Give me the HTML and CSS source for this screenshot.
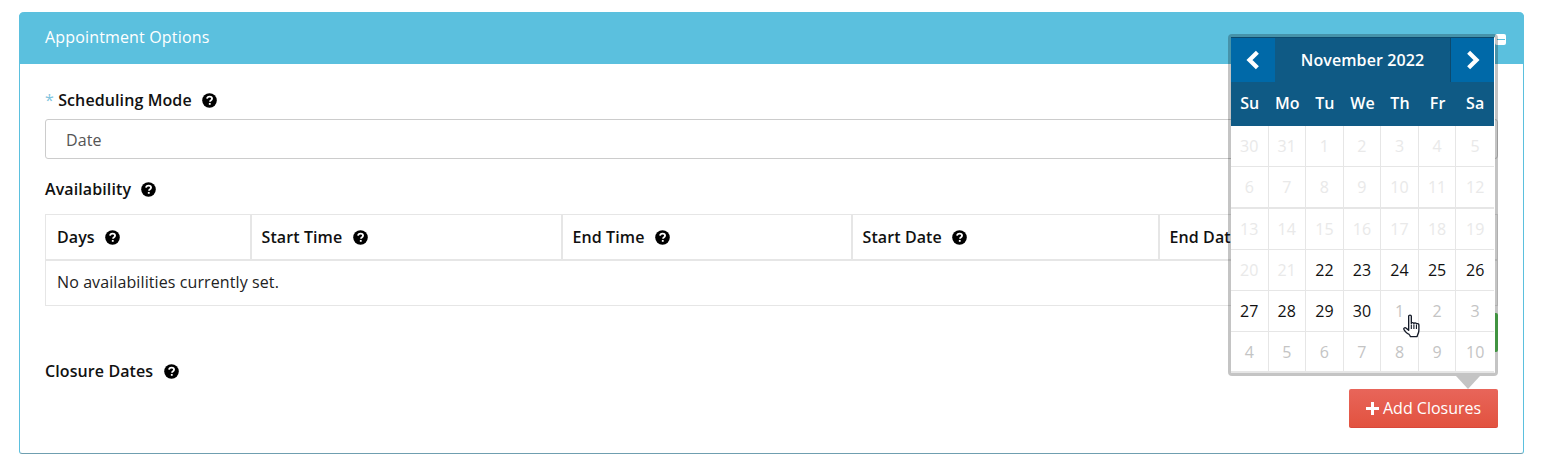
FILE: index.html
```html
<!DOCTYPE html>
<html lang="en">
<head>
<meta charset="utf-8">
<title>Appointment Options</title>
<link rel="stylesheet" href="styles.css">
</head>
<body>
<svg class="defs" width="0" height="0" aria-hidden="true">
  <symbol id="q" viewBox="0 0 14 14">
    <circle cx="7" cy="7" r="6.8" fill="#000"/>
    <path d="M4.700 5.300C4.800 4 5.800 3.300 7.100 3.300c1.300 0 2.300.8 2.300 1.900 0 1-.6 1.400-1.200 1.800-.5.3-.7.5-.7 1.100" fill="none" stroke="#fff" stroke-width="1.700"/>
    <rect x="6.400" y="9.300" width="1.700" height="1.700" fill="#fff"/>
  </symbol>
</svg>
<main class="panel">
  <header class="panel-head">
    <h2 class="panel-title">Appointment Options</h2>
    <span class="collapse"><span class="collapse-bar"></span></span>
  </header>
  <div class="panel-body">
    <div class="label first"><span class="req">*</span> Scheduling Mode <svg class="help"><use href="#q"/></svg></div>
    <div class="select">Date</div>
    <div class="label avail">Availability <svg class="help"><use href="#q"/></svg></div>
    <table class="grid">
      <thead>
        <tr>
          <th class="c1">Days <svg class="help"><use href="#q"/></svg></th>
          <th class="c2">Start Time <svg class="help"><use href="#q"/></svg></th>
          <th class="c3">End Time <svg class="help"><use href="#q"/></svg></th>
          <th class="c4">Start Date <svg class="help"><use href="#q"/></svg></th>
          <th>End Date <svg class="help"><use href="#q"/></svg></th>
        </tr>
      </thead>
      <tbody>
        <tr><td colspan="5">No availabilities currently set.</td></tr>
      </tbody>
    </table>
    <div class="green-row"><button class="btn btn-green">+ Add Availability</button></div>
    <div class="closure-row">
      <div class="label">Closure Dates <svg class="help"><use href="#q"/></svg></div>
      <button class="btn btn-red"><svg class="plus" viewBox="0 0 13 13"><path d="M5 0h3v5h5v3H8v5H5V8H0V5h5z" fill="#fff"/></svg> Add Closures</button>
    </div>
  </div>
</main>

<div class="picker">
  <div class="picker-top">
    <div class="nav"><svg viewBox="0 0 12 16" class="chev"><path d="M9.500 1.800 3.200 8l6.300 6.200" fill="none" stroke="#fff" stroke-width="3.400"/></svg></div>
    <div class="month">November 2022</div>
    <div class="nav nav-r"><svg viewBox="0 0 12 16" class="chev"><path d="M2.500 1.800 8.800 8l-6.300 6.200" fill="none" stroke="#fff" stroke-width="3.400"/></svg></div>
  </div>
  <div class="dow"><span>Su</span><span>Mo</span><span>Tu</span><span>We</span><span>Th</span><span>Fr</span><span>Sa</span></div>
  <div class="days">
    <span class="dis">30</span><span class="dis">31</span><span class="dis">1</span><span class="dis">2</span><span class="dis">3</span><span class="dis">4</span><span class="dis">5</span>
    <span class="dis">6</span><span class="dis">7</span><span class="dis">8</span><span class="dis">9</span><span class="dis">10</span><span class="dis">11</span><span class="dis">12</span>
    <span class="dis">13</span><span class="dis">14</span><span class="dis">15</span><span class="dis">16</span><span class="dis">17</span><span class="dis">18</span><span class="dis">19</span>
    <span class="dis">20</span><span class="dis">21</span><span>22</span><span>23</span><span>24</span><span>25</span><span>26</span>
    <span>27</span><span>28</span><span>29</span><span>30</span><span class="old">1</span><span class="old">2</span><span class="old">3</span>
    <span class="old">4</span><span class="old">5</span><span class="old">6</span><span class="old">7</span><span class="old">8</span><span class="old">9</span><span class="old">10</span>
  </div>
  <div class="arrow"></div>
</div>

<svg class="cursor" viewBox="0 0 18 24" preserveAspectRatio="none" aria-hidden="true">
  <path d="M6 2.200c0-1.500 2.400-1.500 2.400 0V9c0-1 2.300-1 2.300.3 0-1 2.300-1 2.300.4 0-.8 2.200-.8 2.200.6v5.200c0 2-.5 3.200-1.200 4.700-.3.700-.4 1-.4 1.500H7.500c0-1-.7-1.600-1.500-2.500C4.500 19 2.800 16.600 1.800 15c-.8-1.400.8-2.500 2-1.400L6 15.600z" fill="#fff" stroke="#141a28" stroke-width="1.200" stroke-linejoin="round"/>
  <path d="M8.400 10v4.500M10.700 10v4.500M13 10.500v4" fill="none" stroke="#141a28" stroke-width="1"/>
</svg>
</body>
</html>
```
FILE: styles.css
```css
* { box-sizing: border-box; }
html, body { margin: 0; height: 469px; overflow: hidden; }
body {
  padding: 12px 23px 0 19px;
  background: #fff;
  font-family: "Open Sans", sans-serif;
  font-size: 16px;
  letter-spacing: 0.1px;
  color: #222;
  position: relative;
}
.defs { position: absolute; }
.panel {
  height: 442px;
  border: 1px solid #5bc0de;
  border-top: 0;
  border-bottom-color: #6f9fb0;
  border-radius: 5px 5px 3px 3px;
}
.panel-head {
  height: 52px;
  margin: 0 -1px;
  padding: 0 26px;
  background: #5bc0de;
  border-radius: 5px 5px 0 0;
  display: flex;
  align-items: center;
  justify-content: space-between;
}
.panel-title { margin: 0 0 2px; font-size: 16px; font-weight: 400; letter-spacing: 0.16px; color: #fff; }
.collapse {
  position: absolute;
  left: 1495px;
  top: 34px;
  width: 11px;
  height: 11px;
  background: #fff;
  border-radius: 2px;
  display: flex;
  align-items: center;
  justify-content: center;
}
.collapse-bar { width: 8px; height: 1px; background: #5bc0de; }
.panel-body { padding: 0 25px; }
.label { font-weight: 600; line-height: 20px; color: #111; }
.first { padding-top: 26px; }
.avail { margin-top: 20px; }
.req { color: #7fc4de; font-weight: 400; }
.help { width: 15px; height: 15px; margin-left: 6px; vertical-align: -2px; }
.select {
  height: 40px;
  margin-top: 9px;
  padding: 0 20px;
  border: 1px solid #ccc;
  border-radius: 3px;
  line-height: 40px;
  color: #555;
}
.grid {
  width: 100%;
  margin-top: 15px;
  table-layout: fixed;
  border-collapse: collapse;
  border: 1px solid #e6e6e6;
}
.grid th {
  height: 45px;
  padding: 0 10px;
  text-align: left;
  font-weight: 600;
  color: #111;
  border: 2px solid #e6e6e6;
  border-top-width: 1px;
}
.grid th:first-child { border-left-width: 1px; padding-left: 11px; }
.grid th:last-child { border-right-width: 1px; }
.grid td { height: 46px; padding: 0 11px 2px; }
.c1 { width: 205px; }
.c2 { width: 311px; }
.c3 { width: 290px; }
.c4 { width: 307px; }
.green-row { display: flex; justify-content: flex-end; margin-top: 7px; }
.btn {
  height: 39px;
  border: 0;
  border-radius: 2px;
  font: inherit;
  color: #fff;
  padding: 0 16px;
}
.btn-green { background: #55c155; }
.closure-row { display: flex; justify-content: space-between; height: 77px; margin-top: 9px; }
.btn-red {
  width: 149px;
  height: 39px;
  margin-top: 28px;
  padding: 0;
  background: linear-gradient(#e8655a, #e2523f);
  border-bottom: 1px solid #d9483a;
  display: block;
}
.plus { width: 13px; height: 13px; vertical-align: -1px; }

.picker {
  position: absolute;
  left: 1228px;
  top: 34px;
  width: 270px;
  height: 342px;
  border: 3px solid rgba(0, 0, 0, 0.23);
  border-radius: 4px;
  background: #fff;
  background-clip: padding-box;
}
.picker-top {
  display: flex;
  height: 45px;
  background: #0f5a85;
  border-top: 1px solid #0c4a6e;
  color: #fff;
  margin-right: 1px;
}
.nav {
  width: 44px;
  background: #0069a8;
  display: flex;
  align-items: center;
  justify-content: center;
}
.nav-r { border-left: 1px solid #0c4a6e; }
.chev { width: 16px; height: 20px; }
.month {
  flex: 1;
  text-align: center;
  font-weight: 600;
  line-height: 45px;
}
.dow {
  display: grid;
  grid-template-columns: repeat(7, 1fr);
  height: 44px;
  margin-right: 1px;
  background: #0f5a85;
  color: #fff;
  font-weight: 600;
  text-align: center;
  line-height: 43px;
}
.days {
  display: grid;
  grid-template-columns: repeat(7, 1fr);
  grid-template-rows: 41px 41px 42px 41px 41px 41px;
  margin-right: 1px;
}
.days span {
  text-align: center;
  line-height: 40px;
  color: #111;
  border-right: 1px solid #e6e6e6;
  border-bottom: 1px solid #e6e6e6;
}
.days span:nth-child(7n) { border-right: 0; }
.days span:nth-child(n+15):nth-child(-n+21) { border-top: 1px solid #e6e6e6; }
.days span:nth-child(n+36) { border-bottom-width: 2px; }
.days .dis { color: #e9e9e9; }
.days .old { color: #c4c4c4; }
.arrow {
  position: absolute;
  left: 225px;
  top: 339px;
  width: 0;
  height: 0;
  border-left: 12.5px solid transparent;
  border-right: 12.5px solid transparent;
  border-top: 13px solid #c4c4c4;
}
.cursor { position: absolute; left: 1402px; top: 314px; width: 20px; height: 25px; }
```
